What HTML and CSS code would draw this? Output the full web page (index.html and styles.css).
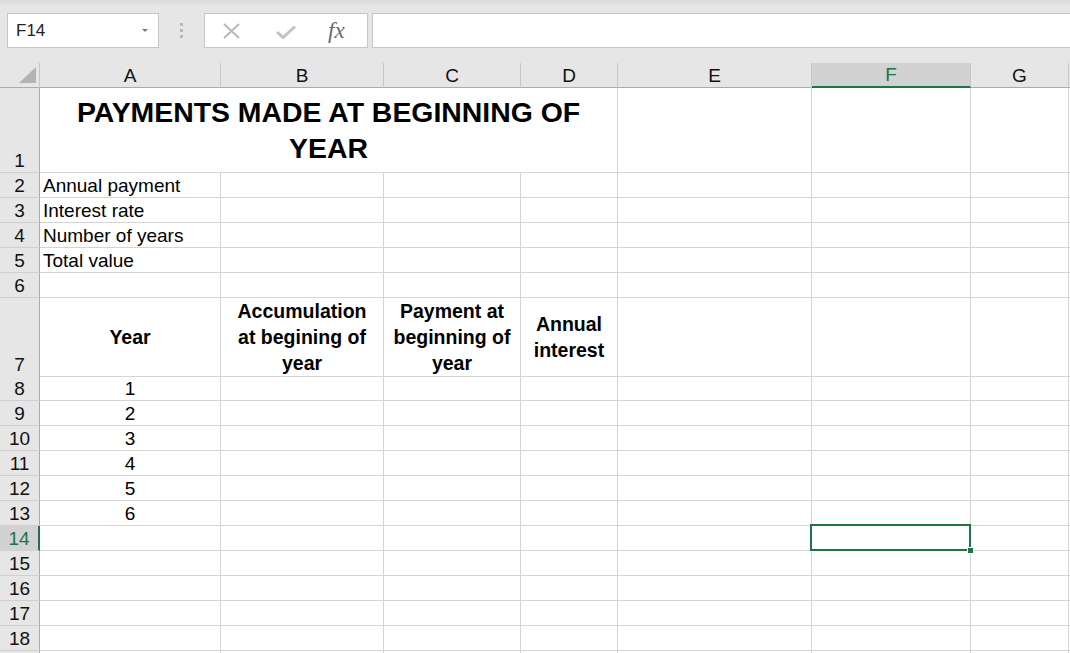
FILE: index.html
```html
<!DOCTYPE html>
<html lang="en">
<head>
    <meta charset="UTF-8">
    <meta name="viewport" content="width=device-width, initial-scale=1.0">
    <title>Payments made at beginning of year</title>
    <link rel="stylesheet" href="styles.css">
</head>
<body>

    <!-- Name box and formula bar -->
    <div class="toolbar">
        <div class="namebox">
            <span class="ref">F14</span>
            <span class="caret"></span>
        </div>
        <div class="grip"><i></i><i></i><i></i></div>
        <div class="fbuttons">
            <svg class="icon-x" width="17" height="16" viewBox="0 0 17 16">
                <path d="M1 1 L16 15 M16 1 L1 15" stroke="#b9b9b9" stroke-width="2" fill="none"/>
            </svg>
            <svg class="icon-check" width="20" height="14" viewBox="0 0 20 14">
                <path d="M1 7 L7 12.5 L19 1.5" stroke="#c2c2c2" stroke-width="3" fill="none"/>
            </svg>
            <span class="fx">fx</span>
        </div>
        <div class="finput"></div>
    </div>

    <div class="sheet">
        <div class="row hdr">
            <div class="corner">
                <svg width="17" height="16" viewBox="0 0 17 16"><polygon points="17,0 17,16 0,16" fill="#b4b4b4"/></svg>
            </div>
            <div class="ch">A</div>
            <div class="ch">B</div>
            <div class="ch">C</div>
            <div class="ch">D</div>
            <div class="ch">E</div>
            <div class="ch active">F</div>
            <div class="ch">G</div>
            <div class="ch"></div>
        </div>

        <div class="row r1">
            <div class="rh">1</div>
            <div class="c title">PAYMENTS MADE AT BEGINNING OF<br>YEAR</div>
            <div class="c"></div><div class="c"></div><div class="c"></div><div class="c"></div>
        </div>

        <div class="row">
            <div class="rh">2</div>
            <div class="c">Annual payment</div>
            <div class="c"></div><div class="c"></div><div class="c"></div><div class="c"></div><div class="c"></div><div class="c"></div><div class="c"></div>
        </div>
        <div class="row">
            <div class="rh">3</div>
            <div class="c">Interest rate</div>
            <div class="c"></div><div class="c"></div><div class="c"></div><div class="c"></div><div class="c"></div><div class="c"></div><div class="c"></div>
        </div>
        <div class="row">
            <div class="rh">4</div>
            <div class="c">Number of years</div>
            <div class="c"></div><div class="c"></div><div class="c"></div><div class="c"></div><div class="c"></div><div class="c"></div><div class="c"></div>
        </div>
        <div class="row">
            <div class="rh">5</div>
            <div class="c">Total value</div>
            <div class="c"></div><div class="c"></div><div class="c"></div><div class="c"></div><div class="c"></div><div class="c"></div><div class="c"></div>
        </div>
        <div class="row">
            <div class="rh">6</div>
            <div class="c"></div><div class="c"></div><div class="c"></div><div class="c"></div><div class="c"></div><div class="c"></div><div class="c"></div><div class="c"></div>
        </div>

        <!-- Table headings -->
        <div class="row r7">
            <div class="rh">7</div>
            <div class="c hd">Year</div>
            <div class="c hd">Accumulation<br>at begining of<br>year</div>
            <div class="c hd">Payment at<br>beginning of<br>year</div>
            <div class="c hd">Annual<br>interest</div>
            <div class="c"></div><div class="c"></div><div class="c"></div><div class="c"></div>
        </div>

        <div class="row">
            <div class="rh">8</div>
            <div class="c num">1</div>
            <div class="c"></div><div class="c"></div><div class="c"></div><div class="c"></div><div class="c"></div><div class="c"></div><div class="c"></div>
        </div>
        <div class="row">
            <div class="rh">9</div>
            <div class="c num">2</div>
            <div class="c"></div><div class="c"></div><div class="c"></div><div class="c"></div><div class="c"></div><div class="c"></div><div class="c"></div>
        </div>
        <div class="row">
            <div class="rh">10</div>
            <div class="c num">3</div>
            <div class="c"></div><div class="c"></div><div class="c"></div><div class="c"></div><div class="c"></div><div class="c"></div><div class="c"></div>
        </div>
        <div class="row">
            <div class="rh">11</div>
            <div class="c num">4</div>
            <div class="c"></div><div class="c"></div><div class="c"></div><div class="c"></div><div class="c"></div><div class="c"></div><div class="c"></div>
        </div>
        <div class="row">
            <div class="rh">12</div>
            <div class="c num">5</div>
            <div class="c"></div><div class="c"></div><div class="c"></div><div class="c"></div><div class="c"></div><div class="c"></div><div class="c"></div>
        </div>
        <div class="row">
            <div class="rh">13</div>
            <div class="c num">6</div>
            <div class="c"></div><div class="c"></div><div class="c"></div><div class="c"></div><div class="c"></div><div class="c"></div><div class="c"></div>
        </div>

        <!-- Active row: F14 is selected -->
        <div class="row">
            <div class="rh active">14</div>
            <div class="c"></div><div class="c"></div><div class="c"></div><div class="c"></div><div class="c"></div>
            <div class="c selected"><div class="sel"><span class="handle"></span></div></div>
            <div class="c"></div><div class="c"></div>
        </div>

        <div class="row">
            <div class="rh">15</div>
            <div class="c"></div><div class="c"></div><div class="c"></div><div class="c"></div><div class="c"></div><div class="c"></div><div class="c"></div><div class="c"></div>
        </div>
        <div class="row">
            <div class="rh">16</div>
            <div class="c"></div><div class="c"></div><div class="c"></div><div class="c"></div><div class="c"></div><div class="c"></div><div class="c"></div><div class="c"></div>
        </div>
        <div class="row">
            <div class="rh">17</div>
            <div class="c"></div><div class="c"></div><div class="c"></div><div class="c"></div><div class="c"></div><div class="c"></div><div class="c"></div><div class="c"></div>
        </div>
        <div class="row">
            <div class="rh">18</div>
            <div class="c"></div><div class="c"></div><div class="c"></div><div class="c"></div><div class="c"></div><div class="c"></div><div class="c"></div><div class="c"></div>
        </div>
        <!-- next row only peeks in at the bottom edge -->
        <div class="row">
            <div class="rh"></div>
            <div class="c"></div><div class="c"></div><div class="c"></div><div class="c"></div><div class="c"></div><div class="c"></div><div class="c"></div><div class="c"></div>
        </div>
    </div>

</body>
</html>
```

FILE: styles.css
```css
* {
    box-sizing: border-box;
}
body {
    margin: 0;
    overflow: hidden;
    font-family: "Liberation Sans", Arial, sans-serif;
    background-color: #fff;
    color: #000;
}

/* formula bar */
.toolbar {
    display: flex;
    align-items: flex-start;
    height: 63px;
    padding: 13px 0 0 7px;
    background: linear-gradient(#dadada 0, #e6e6e6 6px);
}
.namebox {
    display: flex;
    align-items: center;
    width: 152px;
    height: 35px;
    padding-left: 8px;
    border: 1px solid #c6c6c6;
    background-color: #fff;
    font-size: 17px;
    color: #222;
}
.caret {
    margin-left: auto;
    margin-right: 10px;
    border-left: 3px solid transparent;
    border-right: 3px solid transparent;
    border-top: 3px solid #7a7a7a;
}
.grip {
    display: flex;
    flex-direction: column;
    align-items: center;
    gap: 3px;
    width: 45px;
    padding-top: 10px;
}
.grip i {
    width: 3px;
    height: 3px;
    background-color: #b8b8b8;
}
.fbuttons {
    display: flex;
    align-items: center;
    width: 164px;
    height: 35px;
    border: 1px solid #c6c6c6;
    background-color: #fff;
}
.icon-x {
    margin-left: 18px;
}
.icon-check {
    margin-left: 36px;
    margin-top: 2px;
}
.fx {
    margin-left: 32px;
    font-family: "Liberation Serif", "Times New Roman", serif;
    font-style: italic;
    font-size: 23px;
    color: #6a6a6a;
}
.finput {
    flex: 1;
    height: 35px;
    margin-left: 4px;
    border: 1px solid #c6c6c6;
    border-right: 0;
    background-color: #fff;
}

/* grid */
.row {
    display: grid;
    grid-template-columns: 40px 181px 163px 137px 97px 194px 159px 98px 100px;
    height: 25px;
    font-size: 19px;
}
.row.r1 {
    height: 85px;
}
.row.r7 {
    height: 78px;
}
.hdr {
    background-color: #e6e6e6;
}
.corner {
    display: flex;
    align-items: flex-end;
    justify-content: flex-end;
    padding: 0 3px 4px 0;
    border-right: 1px solid #c8c8c8;
    border-bottom: 1px solid #ababab;
}
.ch {
    display: flex;
    align-items: center;
    justify-content: center;
    padding-top: 1px;
    border-right: 1px solid #c8c8c8;
    border-bottom: 1px solid #ababab;
    color: #111;
}
.ch.active {
    background-color: #d2d2d2;
    border-bottom: 2px solid #217346;
    color: #217346;
}
.rh {
    display: flex;
    align-items: flex-end;
    justify-content: center;
    background-color: #e6e6e6;
    border-right: 1px solid #ababab;
    border-bottom: 1px solid #d0d0d0;
    color: #111;
}
.rh.active {
    background-color: #d2d2d2;
    border-right: 2px solid #217346;
    color: #217346;
}
.c {
    display: flex;
    align-items: flex-end;
    padding: 0 3px;
    border-right: 1px solid #d4d4d4;
    border-bottom: 1px solid #d4d4d4;
    white-space: nowrap;
}
.title {
    grid-column: span 4;
    align-items: center;
    justify-content: center;
    text-align: center;
    font-weight: bold;
    font-size: 28.4px;
    line-height: 36px;
}
.hd {
    align-items: center;
    justify-content: center;
    text-align: center;
    font-weight: bold;
    font-size: 19.5px;
    line-height: 26px;
}
.num {
    justify-content: center;
}
.selected {
    position: relative;
}
.sel {
    position: absolute;
    left: -2px;
    top: -2px;
    right: -1px;
    bottom: -1px;
    border: 2px solid #217346;
}
.handle {
    position: absolute;
    right: -5px;
    bottom: -5px;
    width: 7px;
    height: 7px;
    background-color: #217346;
    border: 1px solid #fff;
}
```
